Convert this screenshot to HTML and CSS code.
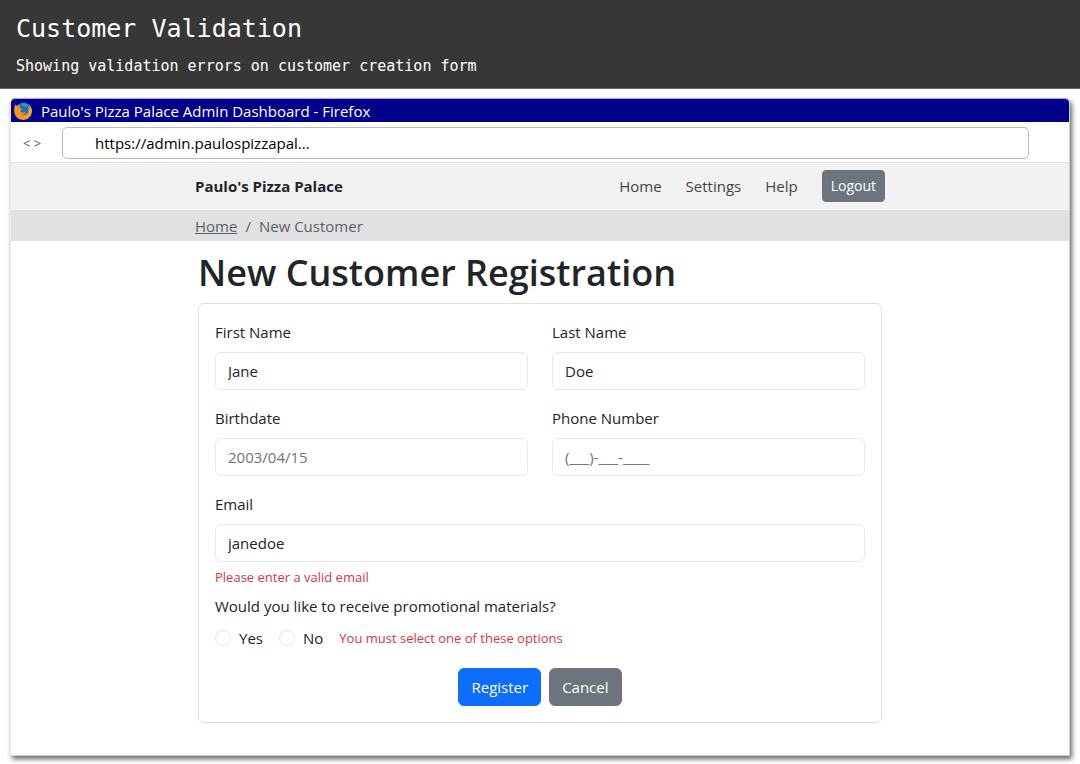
FILE: index.html
```html
<!DOCTYPE html>
<html lang="en">
<head>
<meta charset="utf-8">
<title>Customer Validation</title>
<link rel="stylesheet" href="styles.css">
</head>
<body>
<header class="story">
  <h1 class="story-title">Customer Validation</h1>
  <p class="story-text">Showing validation errors on customer creation form</p>
</header>
<main class="window">
  <div class="titlebar">
    <svg class="logo" viewBox="0 0 18 18" aria-hidden="true">
      <circle cx="9.5" cy="8.5" r="8" fill="#1b6fb5"/>
      <path d="M8 1.500c3-1 5.500.3 6.500 2.500-1.500-.5-2 .8-3 .8s-1.500-1.200-3.500-1.200z" fill="#3f97d2"/>
      <path d="M1.300 2.200c.3.900.8 1.300 1.500 1.500C4 3 5.300 3 6.500 3.700 5.500 4.200 5.200 5 5.600 5.900l2.600.5c-.2 1.100-1.400 1.400-1.800 2.400.2 1.500 1.700 2.100 3.100 1.600 1-.4 1.900-.3 2.400.3-.8 1.500-2.600 2.200-4.300 1.700 3 1.900 6.600-.2 6.800-3.400.1-2-.2-3.900-.8-5.100 1.400.8 2.100 2 2.300 3-.2-2-.9-3.500-1.900-4.800 2.600 1.400 4.100 4 4 7.200-.2 4.900-3.900 8.700-8.700 8.700C4 18 .3 13.800.2 9.300.1 6.500.5 4.200 1.300 2.200z" fill="#f7941d"/>
      <path d="M15.500 4.500c1.500 4.500-.5 9.300-5.500 10.800 3.500 0 6.800-2 7.500-6.300.2-1.700-.6-3.500-2-4.500z" fill="#e9b04a"/>
    </svg>
    <span>Paulo's Pizza Palace Admin Dashboard - Firefox</span>
  </div>
  <div class="toolbar">
    <span class="arrows">&lt; &gt;</span>
    <input class="url" type="text" aria-label="Address" value="https://admin.paulospizzapal...">
  </div>
  <nav class="navbar">
    <div class="container nav-row">
      <a class="brand" href="#">Paulo's Pizza Palace</a>
      <a class="nav-link" href="#">Home</a>
      <a class="nav-link" href="#">Settings</a>
      <a class="nav-link" href="#">Help</a>
      <button class="btn btn-small" type="button">Logout</button>
    </div>
  </nav>
  <div class="crumbs">
    <div class="container crumb-row">
      <a class="crumb-link" href="#">Home</a><span>/</span><span>New Customer</span>
    </div>
  </div>
  <section class="page">
    <h2 class="page-title">New Customer Registration</h2>
    <form class="card" novalidate>
      <div class="field">
        <label for="first">First Name</label>
        <input class="control" id="first" type="text" value="Jane">
      </div>
      <div class="field">
        <label for="last">Last Name</label>
        <input class="control" id="last" type="text" value="Doe">
      </div>
      <div class="field">
        <label for="birth">Birthdate</label>
        <input class="control" id="birth" type="text" placeholder="2003/04/15">
      </div>
      <div class="field">
        <label for="phone">Phone Number</label>
        <input class="control" id="phone" type="text" placeholder="(___)-___-____">
      </div>
      <div class="field email wide">
        <label for="email">Email</label>
        <input class="control" id="email" type="email" value="janedoe">
      </div>
      <p class="error wide">Please enter a valid email</p>
      <fieldset class="promo wide">
        <legend>Would you like to receive promotional materials?</legend>
        <div class="options">
          <label class="option"><input class="radio" type="radio" name="promo">Yes</label>
          <label class="option"><input class="radio" type="radio" name="promo">No</label>
          <span class="error">You must select one of these options</span>
        </div>
      </fieldset>
      <div class="actions wide">
        <button class="btn btn-primary" type="button">Register</button>
        <button class="btn" type="button">Cancel</button>
      </div>
    </form>
  </section>
</main>
</body>
</html>
```
FILE: styles.css
```css
* {
  box-sizing: border-box;
}

body {
  margin: 0;
  background: #fff;
  color: #212529;
  font: 15px/24px "Open Sans", "Noto Sans", sans-serif;
}

h1, h2, p {
  margin: 0;
  font-weight: 400;
}

input, button {
  font: inherit;
  color: inherit;
}

.story {
  padding: 13px 16px 10px;
  border-bottom: 1px solid #666;
  background: #373737;
  color: #fff;
  font-family: "DejaVu Sans Mono", "Liberation Mono", monospace;
}

.story-title {
  margin-bottom: 9px;
  font-size: 25px;
  line-height: 32px;
}

.story-text {
  font-size: 15px;
  line-height: 24px;
}

.window {
  margin: 9px 10px;
  padding-bottom: 32px;
  border: 1px solid #ccc;
  border-top-color: #aaaae0;
  border-left-color: #e8e8e8;
  border-radius: 5px 5px 0 0;
  box-shadow: 2px 3px 5px rgba(0, 0, 0, 0.6);
}

.titlebar {
  display: flex;
  align-items: center;
  gap: 9px;
  height: 23px;
  padding: 0 4px 0 3px;
  border-radius: 4px 4px 0 0;
  background: #00008b;
  color: #fff;
}

.logo {
  width: 18px;
  height: 18px;
}

.toolbar {
  display: flex;
  align-items: center;
  gap: 15px;
  padding: 5px 40px 3px 12px;
  border-bottom: 1px solid #e4e4e4;
}

.arrows {
  width: 24px;
  color: #555;
  font-size: 13px;
  word-spacing: normal;
  white-space: pre;
}

.url {
  flex: 1;
  min-width: 0;
  height: 32px;
  padding: 0 32px;
  border: 1px solid #bbb;
  border-radius: 5px;
  background: #fff;
  color: #000;
}

.navbar {
  padding: 7px 0 8px;
  background: #f2f2f2;
}

.container {
  max-width: 690px;
  margin: 0 auto;
}

.nav-row {
  display: flex;
  align-items: center;
  gap: 24px;
}

.brand {
  margin-right: auto;
  color: #212529;
  font-weight: 700;
  text-decoration: none;
}

.nav-link {
  color: #444;
  text-decoration: none;
}

.crumbs {
  padding: 4px 0 3px;
  background: #e0e1e3;
  color: #5c5f63;
}

.crumb-row {
  display: flex;
  gap: 8px;
}

.crumb-link {
  color: inherit;
}

.page {
  max-width: 684px;
  margin: 0 auto;
  padding-top: 8px;
}

.page-title {
  margin-bottom: 6px;
  font-size: 36px;
  font-weight: 600;
  line-height: 48px;
}

.card {
  display: grid;
  grid-template-columns: 1fr 1fr;
  column-gap: 24px;
  padding: 16px;
  border: 1px solid #dedede;
  border-radius: 6px;
}

.wide {
  grid-column: 1 / -1;
}

.field {
  display: grid;
  gap: 8px;
  margin-bottom: 16px;
}

.email {
  margin-bottom: 7px;
}

.control {
  width: 100%;
  height: 38px;
  padding: 0 12px;
  border: 1px solid #e6e8ea;
  border-radius: 6px;
  background: #fff;
}

.control::placeholder {
  color: #6c757d;
  opacity: 1;
}

.error {
  color: #dc3545;
  font-size: 13px;
  line-height: 16px;
}

.promo {
  margin: 9px 0 0;
  padding: 0;
  border: 0;
}

.promo legend {
  padding: 0;
}

.options {
  display: flex;
  align-items: center;
  gap: 16px;
  margin-top: 8px;
}

.option {
  display: flex;
  align-items: center;
  gap: 8px;
}

.radio {
  appearance: none;
  width: 16px;
  height: 16px;
  margin: 0;
  border: 1px solid #e4e6e8;
  border-radius: 50%;
}

.actions {
  display: flex;
  justify-content: center;
  gap: 8px;
  margin-top: 18px;
}

.btn {
  height: 38px;
  padding: 0 12px;
  border: 1px solid #6c757d;
  border-radius: 6px;
  background: #6c757d;
  color: #fff;
}

.btn-primary {
  border-color: #0d6efd;
  background: #0d6efd;
}

.btn-small {
  height: 32px;
  padding: 0 8px;
  border-radius: 4px;
  font-size: 14px;
}
```
